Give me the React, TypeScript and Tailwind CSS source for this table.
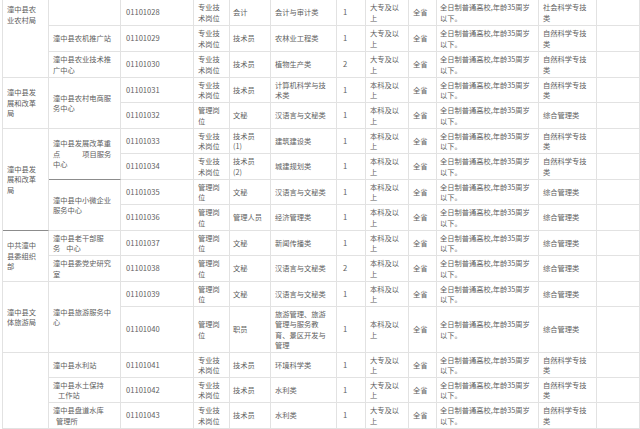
import React from "react";

type Row = {
  code: string;
  cat: string[];
  name: string[];
  major: string[];
  n: string;
  edu: string[];
  type: string[];
};

const ZJ = ["专业技", "术岗位"];
const GL = ["管理岗", "位"];
const DZ = ["大专及以", "上"];
const BK = ["本科及以", "上"];
const ZR = ["自然科学专技", "类"];
const ZH = ["综合管理类"];

const rows: Row[] = [
  { code: "01101028", cat: ZJ, name: ["会计"], major: ["会计与审计类"], n: "1", edu: DZ, type: ["社会科学专技", "类"] },
  { code: "01101029", cat: ZJ, name: ["技术员"], major: ["农林业工程类"], n: "1", edu: DZ, type: ZR },
  { code: "01101030", cat: ZJ, name: ["技术员"], major: ["植物生产类"], n: "2", edu: DZ, type: ZR },
  { code: "01101031", cat: ZJ, name: ["技术员"], major: ["计算机科学与技", "术类"], n: "1", edu: BK, type: ZR },
  { code: "01101032", cat: GL, name: ["文秘"], major: ["汉语言与文秘类"], n: "1", edu: BK, type: ZH },
  { code: "01101033", cat: ZJ, name: ["技术员", "(1)"], major: ["建筑建设类"], n: "1", edu: BK, type: ZR },
  { code: "01101034", cat: ZJ, name: ["技术员", "(2)"], major: ["城建规划类"], n: "1", edu: BK, type: ZR },
  { code: "01101035", cat: GL, name: ["文秘"], major: ["汉语言与文秘类"], n: "1", edu: BK, type: ZH },
  { code: "01101036", cat: GL, name: ["管理人员"], major: ["经济管理类"], n: "1", edu: BK, type: ZH },
  { code: "01101037", cat: GL, name: ["文秘"], major: ["新闻传播类"], n: "1", edu: BK, type: ZH },
  { code: "01101038", cat: GL, name: ["文秘"], major: ["汉语言与文秘类"], n: "2", edu: BK, type: ZH },
  { code: "01101039", cat: GL, name: ["文秘"], major: ["汉语言与文秘类"], n: "1", edu: BK, type: ZH },
  { code: "01101040", cat: GL, name: ["职员"], major: ["旅游管理、旅游", "管理与服务教", "育、景区开发与", "管理"], n: "1", edu: BK, type: ZH },
  { code: "01101041", cat: ZJ, name: ["技术员"], major: ["环境科学类"], n: "1", edu: DZ, type: ZR },
  { code: "01101042", cat: ZJ, name: ["技术员"], major: ["水利类"], n: "1", edu: DZ, type: ZR },
  { code: "01101043", cat: ZJ, name: ["技术员"], major: ["水利类"], n: "1", edu: DZ, type: ZR },
];

const base =
  "flex items-center border-r border-b border-[#e2e2e2] whitespace-nowrap overflow-hidden";

function Lines({ lines }: { lines: string[] }) {
  return (
    <div>
      {lines.map((l, i) => (
        <div key={i}>{l}</div>
      ))}
    </div>
  );
}

type Span = { cls: string; content: React.ReactNode };

const col0: Record<number, Span> = {
  0: {
    cls: "row-span-3 items-start pt-[4px] pl-[4px] " + base,
    content: <Lines lines={["潼中县农", "业农村局"]} />,
  },
  3: { cls: "row-span-2 pl-[4px] " + base, content: <Lines lines={["潼中县发", "展和改革", "局"]} /> },
  5: {
    cls: "row-span-4 pl-[4px] flex items-center border-r border-b border-b-[#8c8c8c] border-r-[#e2e2e2] whitespace-nowrap overflow-hidden",
    content: <Lines lines={["潼中县发", "展和改革", "局"]} />,
  },
  9: { cls: "row-span-2 pl-[4px] " + base, content: <Lines lines={["中共潼中", "县委组织", "部"]} /> },
  11: { cls: "row-span-2 pl-[4px] " + base, content: <Lines lines={["潼中县文", "体旅游局"]} /> },
  13: { cls: "row-span-3 pl-[4px] " + base, content: null },
};

const col1: Record<number, Span> = {
  0: { cls: "pl-[4px] " + base, content: null },
  1: { cls: "pl-[4px] " + base, content: <Lines lines={["潼中县农机推广站"]} /> },
  2: { cls: "pl-[4px] " + base, content: <Lines lines={["潼中县农业技术推", "广中心"]} /> },
  3: { cls: "row-span-2 pl-[4px] " + base, content: <Lines lines={["潼中县农村电商服", "务中心"]} /> },
  5: {
    cls: "row-span-2 pl-[4px] flex items-center border-r border-b border-b-[#8c8c8c] border-r-[#e2e2e2] whitespace-nowrap overflow-hidden",
    content: (
      <div>
        <div>潼中县发展改革重</div>
        <div>
          点<span className="ml-[22px]">项目服务</span>
        </div>
        <div>中心</div>
      </div>
    ),
  },
  7: { cls: "row-span-2 pl-[4px] " + base, content: <Lines lines={["潼中县中小微企业", "服务中心"]} /> },
  9: {
    cls: "pl-[4px] " + base,
    content: (
      <div>
        <div>潼中县老干部服</div>
        <div>
          务<span className="ml-[6px]">中心</span>
        </div>
      </div>
    ),
  },
  10: { cls: "pl-[4px] " + base, content: <Lines lines={["潼中县委党史研究", "室"]} /> },
  11: { cls: "row-span-2 pl-[4px] " + base, content: <Lines lines={["潼中县旅游服务中", "心"]} /> },
  13: { cls: "pl-[4px] " + base, content: <Lines lines={["潼中县水利站"]} /> },
  14: {
    cls: "pl-[4px] " + base,
    content: (
      <div>
        <div>潼中县水土保持</div>
        <div className="pl-[5px]">工作站</div>
      </div>
    ),
  },
  15: {
    cls: "pl-[4px] " + base,
    content: (
      <div>
        <div>潼中县盘道水库</div>
        <div className="pl-[3px]">管理所</div>
      </div>
    ),
  },
};

export default function App() {
  return (
    <div className="w-[640px] h-[429px] overflow-hidden bg-white">
      <div
        className="ml-[2px] grid grid-cols-[46px_72px_73px_36px_41px_66px_29px_43px_28px_102px_58px_43px] grid-rows-[26px_26px_26px_25px_26px_25px_26px_25px_26px_25px_26px_25px_46px_25px_25px_26px] border-l border-[#e2e2e2] text-[7.25px] leading-[10.5px] text-[#5e5e5e]"
        style={{ fontFamily: '"Noto Sans CJK SC", "Noto Sans", sans-serif' }}
      >
        {rows.map((r, i) => (
          <React.Fragment key={r.code}>
            {col0[i] && <div className={col0[i].cls}>{col0[i].content}</div>}
            {col1[i] && <div className={col1[i].cls}>{col1[i].content}</div>}
            <div className={"pl-[5px] text-[7.6px] " + base}>{r.code}</div>
            <div className={"pl-[4px] " + base}>
              <Lines lines={r.cat} />
            </div>
            <div className={"pl-[3px] " + base}>
              <Lines lines={r.name} />
            </div>
            <div className={"pl-[4px] " + base}>
              <Lines lines={r.major} />
            </div>
            <div className={"pl-[6px] text-[7.6px] " + base}>{r.n}</div>
            <div className={"pl-[4px] " + base}>
              <Lines lines={r.edu} />
            </div>
            <div className={"pl-[4px] " + base}>全省</div>
            <div className={"pl-[3px] " + base}>
              <Lines lines={["全日制普通高校,年龄35周岁", "以下。"]} />
            </div>
            <div className={"pl-[4px] " + base}>
              <Lines lines={r.type} />
            </div>
            <div className={base}></div>
          </React.Fragment>
        ))}
      </div>
    </div>
  );
}
